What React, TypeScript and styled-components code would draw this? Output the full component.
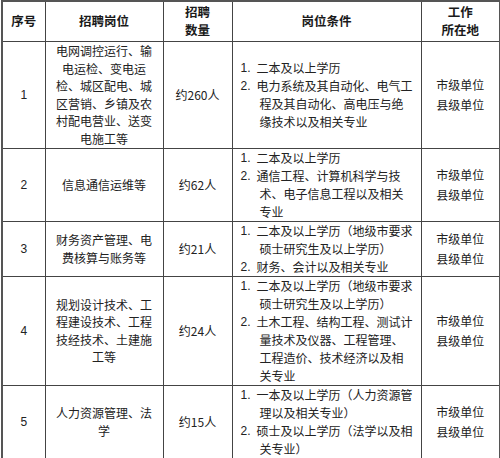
import styled, { createGlobalStyle } from "styled-components";

const GlobalStyle = createGlobalStyle`
  html, body {
    margin: 0;
    padding: 0;
    background: #ffffff;
  }
  body {
    font-family: "Noto Sans CJK SC", "Liberation Sans", sans-serif;
    color: #222222;
  }
`;

const Table = styled.table`
  margin: 0 0 0 1px;
  width: 498px;
  table-layout: fixed;
  border-collapse: collapse;
  border: 2px solid #555555;
  font-size: 12px;
  line-height: 17.5px;
`;

const HeadCell = styled.th`
  border: 1px solid #444444;
  font-weight: bold;
  font-size: 12.5px;
  line-height: 18px;
  text-align: center;
  vertical-align: middle;
  padding: 0;
  color: #1a1a1a;
`;

const Row = styled.tr<{ h: number }>`
  height: ${(p) => p.h}px;
`;

const Cell = styled.td<{ lh?: number; pad?: number }>`
  border: 1px solid #444444;
  text-align: center;
  vertical-align: middle;
  padding: 0 ${(p) => p.pad ?? 4}px;
  line-height: ${(p) => p.lh ?? 17.5}px;
`;

const ReqCell = styled.td`
  border: 1px solid #444444;
  text-align: left;
  vertical-align: middle;
  padding: 0;
  line-height: 18px;
`;

const List = styled.ol`
  margin: 0;
  padding: 0 0 0 8px;
  list-style: none;
`;

const Item = styled.li`
  display: grid;
  grid-template-columns: 16px 1fr;
`;

const Num = styled.span`
  font-family: "Liberation Sans", sans-serif;
`;

const Line = styled.span<{ wrapped: boolean }>`
  display: block;
  white-space: nowrap;
  padding-left: ${(p) => (p.wrapped ? 3 : 0)}px;
`;

interface IRow {
  no: string;
  post: string;
  count: string;
  reqs: string[][];
  h: number;
}

const rows: IRow[] = [
  {
    no: "1",
    post: "电网调控运行、输电运检、变电运检、城区配电、城区营销、乡镇及农村配电营业、送变电施工等",
    count: "约260人",
    reqs: [
      ["二本及以上学历"],
      ["电力系统及其自动化、电气工", "程及其自动化、高电压与绝", "缘技术以及相关专业"],
    ],
    h: 107,
  },
  {
    no: "2",
    post: "信息通信运维等",
    count: "约62人",
    reqs: [
      ["二本及以上学历"],
      ["通信工程、计算机科学与技", "术、电子信息工程以及相关", "专业"],
    ],
    h: 72,
  },
  {
    no: "3",
    post: "财务资产管理、电费核算与账务等",
    count: "约21人",
    reqs: [
      ["二本及以上学历（地级市要求", "硕士研究生及以上学历）"],
      ["财务、会计以及相关专业"],
    ],
    h: 55,
  },
  {
    no: "4",
    post: "规划设计技术、工程建设技术、工程技经技术、土建施工等",
    count: "约24人",
    reqs: [
      ["二本及以上学历（地级市要求", "硕士研究生及以上学历）"],
      ["土木工程、结构工程、测试计", "量技术及仪器、工程管理、", "工程造价、技术经济以及相", "关专业"],
    ],
    h: 108,
  },
  {
    no: "5",
    post: "人力资源管理、法学",
    count: "约15人",
    reqs: [
      ["一本及以上学历（人力资源管", "理以及相关专业）"],
      ["硕士及以上学历（法学以及相", "关专业）"],
    ],
    h: 72,
  },
];

const App = () => {
  return (
    <>
      <GlobalStyle />
      <Table>
        <colgroup>
          <col style={{ width: 43 }} />
          <col style={{ width: 118 }} />
          <col style={{ width: 69 }} />
          <col style={{ width: 189 }} />
          <col style={{ width: 79 }} />
        </colgroup>
        <thead>
          <Row h={40}>
            <HeadCell>序号</HeadCell>
            <HeadCell>招聘岗位</HeadCell>
            <HeadCell>
              招聘
              <br />
              数量
            </HeadCell>
            <HeadCell>岗位条件</HeadCell>
            <HeadCell>
              工作
              <br />
              所在地
            </HeadCell>
          </Row>
        </thead>
        <tbody>
          {rows.map((r) => (
            <Row key={r.no} h={r.h}>
              <Cell>
                <Num>{r.no}</Num>
              </Cell>
              <Cell pad={6}>{r.post}</Cell>
              <Cell>{r.count}</Cell>
              <ReqCell>
                <List>
                  {r.reqs.map((lines, i) => (
                    <Item key={i}>
                      <Num>{i + 1}.</Num>
                      <span>
                        {lines.map((l, j) => (
                          <Line key={j} wrapped={j > 0}>
                            {l}
                          </Line>
                        ))}
                      </span>
                    </Item>
                  ))}
                </List>
              </ReqCell>
              <Cell lh={20}>
                市级单位
                <br />
                县级单位
              </Cell>
            </Row>
          ))}
        </tbody>
      </Table>
    </>
  );
};

export default App;
